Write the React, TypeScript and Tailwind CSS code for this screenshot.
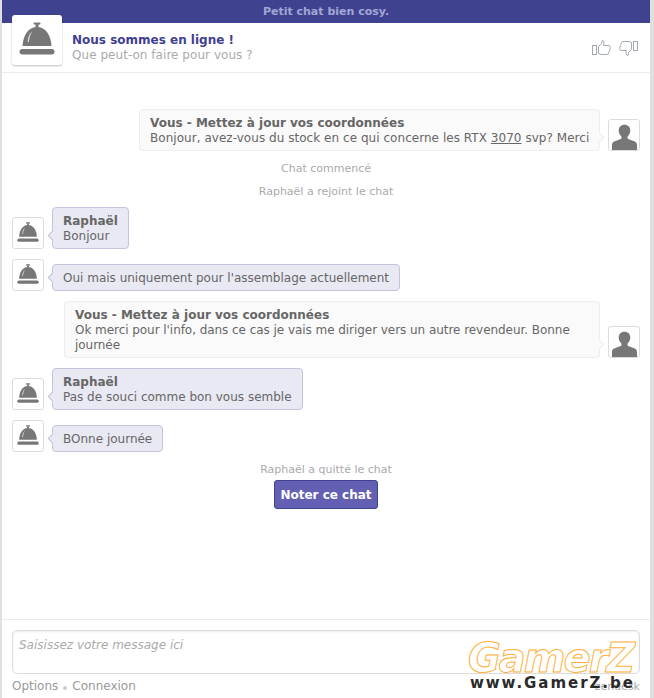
import React from "react";

const font = { fontFamily: '"DejaVu Sans", Verdana, sans-serif' };

function Bell({ size = 32 }: { size?: number }) {
  return (
    <svg width={size} height={size} viewBox="0 0 36 36" fill="#777777">
      <rect x="14.5" y="0.5" width="7" height="2" rx="1" />
      <rect x="16.5" y="2" width="3" height="3.5" />
      <path d="M18 5C9.5 5 4 13 3.500 24h29C32 13 26.500 5 18 5z" />
      <path d="M8.500 20C9 15 10.500 11.500 13 9.500 11.300 13 10.300 16 9.800 20z" fill="#ffffff" opacity="0.75" />
      <rect x="0.500" y="27" width="35" height="5.500" rx="2.750" />
    </svg>
  );
}

function Person() {
  return (
    <svg width="29" height="26" viewBox="0 0 30 30" preserveAspectRatio="none" fill="#777777" className="block">
      <path d="M15 1c-3.800 0-6 2.800-6 6.500 0 3 1.300 5.400 2.800 6.800v2.700L5 20c-2 .8-3 2-3 5v5h26v-5c0-3-1-4.200-3-5l-6.800-3v-2.700c1.500-1.400 2.800-3.800 2.800-6.800C21 3.800 18.800 1 15 1z" />
    </svg>
  );
}

function Thumb({ down }: { down?: boolean }) {
  return (
    <svg width="19" height="16" viewBox="0 0 19 16" fill="#ffffff" stroke="#a4a9b5" strokeWidth="1" className={down ? "rotate-180" : ""}>
      <rect x="0.500" y="5.500" width="4" height="9" />
      <path d="M6.500 6.500 L9.500 3.500 L10 0.500 C12 0.500 12.500 2.500 11.500 5.500 L17 5.500 C18.500 6 18.500 7.500 17.800 8 C18.500 9 18 10 17.200 10.300 C17.800 11.300 17.200 12.300 16.300 12.500 C16.700 13.800 16 14.500 15 14.500 L9 14.500 L6.500 13.500 Z" />
    </svg>
  );
}

function AgentAvatar() {
  return (
    <div className="w-8 h-8 shrink-0 bg-white border border-[#dcdcdc] rounded-[3px] flex items-center justify-center">
      <Bell size={22} />
    </div>
  );
}

function VisitorAvatar() {
  return (
    <div className="w-8 h-8 shrink-0 bg-white border border-[#dcdcdc] rounded-[3px] flex items-end justify-center overflow-hidden">
      <Person />
    </div>
  );
}

function AgentMsg({ name, text, mt }: { name?: string; text: string; mt: string }) {
  return (
    <div className={`flex items-end pl-[10px] ${mt}`}>
      <AgentAvatar />
      <div className="relative ml-2 bg-[#e9e9f3] border border-[#c3c3de] rounded-[4px] px-[10px] pt-[6px] pb-[4px] text-[12px] leading-[15px] text-[#666666]">
        <span className="absolute left-[-4px] bottom-[9px] w-[7px] h-[7px] rotate-45 bg-[#e9e9f3] border-l border-b border-[#c3c3de]" />
        {name && <div className="font-bold">{name}</div>}
        <div>{text}</div>
      </div>
    </div>
  );
}

function VisitorMsg({ children, mt, width }: { children: React.ReactNode; mt: string; width: string }) {
  return (
    <div className={`flex items-end justify-end pr-[10px] ${mt}`}>
      <div className={`relative mr-2 bg-[#fafafa] border border-[#eeeeee] rounded-[4px] px-[10px] pt-[6px] pb-[4px] text-[12px] leading-[15px] text-[#666666] ${width}`}>
        <span className="absolute right-[-4px] bottom-[9px] w-[7px] h-[7px] rotate-45 bg-[#fafafa] border-r border-t border-[#eeeeee]" />
        <div className="font-bold">Vous - Mettez à jour vos coordonnées</div>
        {children}
      </div>
      <VisitorAvatar />
    </div>
  );
}

function Notice({ text, mt }: { text: string; mt: string }) {
  return <div className={`text-center text-[11px] leading-[14px] text-[#aaaaaa] ${mt}`}>{text}</div>;
}

export default function App() {
  return (
    <div className="relative w-[654px] h-[698px] overflow-hidden bg-white border-l-2 border-r-4 border-[#e0e0e0] flex flex-col" style={font}>
      <div className="h-[23px] shrink-0 bg-[#3f438f] text-[#a3a6d6] text-[11px] font-bold text-center leading-[23px]">
        Petit chat bien cosy.
      </div>

      <div className="relative h-[50px] shrink-0 border-b border-[#eaeaea] flex items-start pl-[10px]">
        <div className="w-[50px] h-[50px] -mt-2 shrink-0 bg-white rounded-[3px] shadow-[0_1px_2px_rgba(0,0,0,0.25)] flex items-center justify-center">
          <Bell size={36} />
        </div>
        <div className="ml-[10px] mt-[9px]">
          <div className="text-[12px] leading-4 font-bold text-[#3f3f8f]">Nous sommes en ligne !</div>
          <div className="text-[12px] leading-4 -mt-px tracking-[0.04px] text-[#aaaaaa]">Que peut-on faire pour vous ?</div>
        </div>
        <div className="ml-auto mr-3 mt-[17px] flex gap-2">
          <Thumb />
          <Thumb down />
        </div>
      </div>

      <div className="flex-1 min-h-0">
        <VisitorMsg mt="mt-[36px]" width="w-[461px]">
          <div className="whitespace-nowrap tracking-[0.04px]">
            Bonjour, avez-vous du stock en ce qui concerne les RTX <span className="underline">3070</span> svp? Merci
          </div>
        </VisitorMsg>
        <Notice text="Chat commencé" mt="mt-[11px]" />
        <Notice text="Raphaël a rejoint le chat" mt="mt-[9px]" />
        <AgentMsg name="Raphaël" text="Bonjour" mt="mt-[8px]" />
        <AgentMsg text="Oui mais uniquement pour l'assemblage actuellement" mt="mt-[10px]" />
        <VisitorMsg mt="mt-[10px]" width="w-[536px]">
          <div className="tracking-[-0.05px]">Ok merci pour l'info, dans ce cas je vais me diriger vers un autre revendeur. Bonne journée</div>
        </VisitorMsg>
        <AgentMsg name="Raphaël" text="Pas de souci comme bon vous semble" mt="mt-[10px]" />
        <AgentMsg text="BOnne journée" mt="mt-[10px]" />
        <Notice text="Raphaël a quitté le chat" mt="mt-[11px]" />
        <div className="flex justify-center mt-[3px]">
          <button className="h-[29px] w-[104px] bg-[#6360b3] border border-[#3f438f] rounded-[3px] text-white text-[12px] font-bold">
            Noter ce chat
          </button>
        </div>
      </div>

      <div className="h-[79px] shrink-0 border-t border-[#eaeaea] px-[10px] pt-[10px]">
        <div className="h-[44px] border border-[#dcdcdc] rounded-[5px] shadow-[inset_0_1px_2px_rgba(0,0,0,0.08)] px-[6px] pt-[7px] pb-[5px] text-[12px] leading-[15px] italic text-[#aaaaaa]">
          Saisissez votre message ici
        </div>
        <div className="flex items-center mt-[5px] text-[12px] leading-[15px] text-[#999999]">
          <span>Options</span>
          <span className="w-[4px] h-[4px] rounded-full bg-[#cccccc] mx-[5px] mt-[2px]" />
          <span>Connexion</span>
          <span className="ml-auto text-[11px] text-[#aaaaaa]">zendesk</span>
        </div>
      </div>

      <div className="absolute left-[466px] top-[634px] text-[40px] leading-[48px] italic font-bold tracking-[-2px] text-white/40 [-webkit-text-stroke:1px_#fdb13c]">
        GamerZ
      </div>
      <div className="absolute left-[468px] top-[674px] text-[15px] leading-[18px] font-bold tracking-[1.95px] text-[#2a2a2a]">
        www.GamerZ.be
      </div>
    </div>
  );
}
